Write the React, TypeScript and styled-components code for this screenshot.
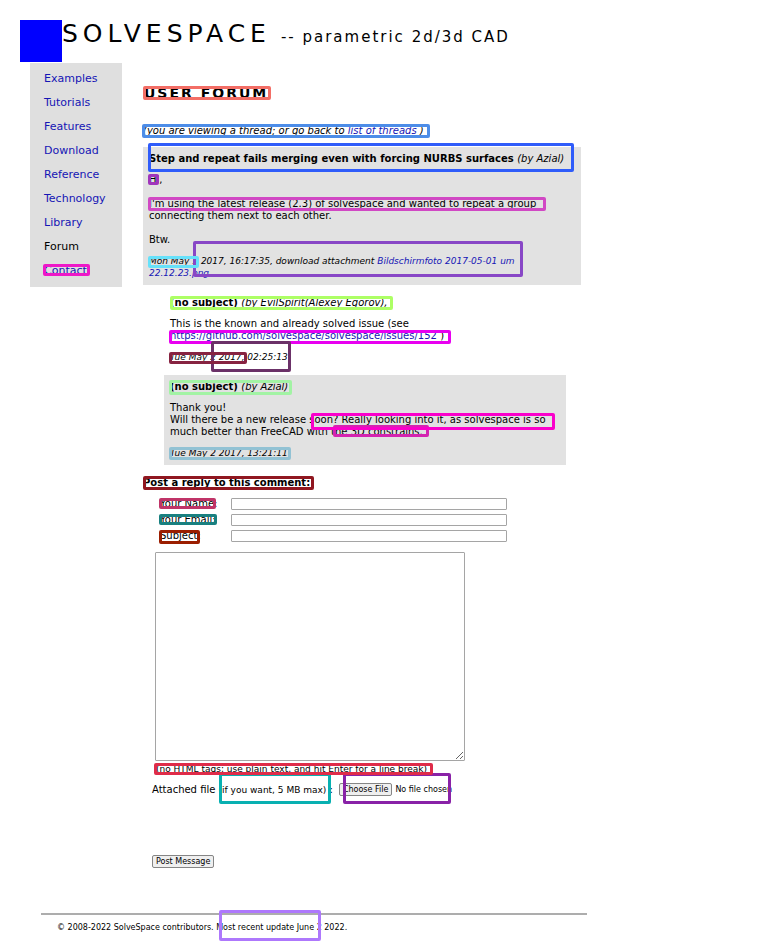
import React from "react";
import styled, { createGlobalStyle, css } from "styled-components";

const Global = createGlobalStyle`
  *, *::before, *::after { box-sizing: border-box; }
  body {
    margin: 0;
    background: #fff;
    color: #000;
    font-family: "DejaVu Sans", Verdana, sans-serif;
    font-size: 10px;
    line-height: 12px;
  }
`;

const Page = styled.div`
  position: relative;
  max-width: 768px;
  padding: 20px 20px 0;
`;

const Header = styled.header`
  display: flex;
  align-items: flex-start;
  white-space: nowrap;
`;

const Logo = styled.div`
  flex: none;
  width: 42px;
  height: 42px;
  background: #0000ff;
`;

const Brand = styled.div`
  font-size: 25px;
  line-height: 28px;
  letter-spacing: 5px;
`;

const Tagline = styled.span`
  margin-left: 10px;
  font-size: 15px;
  letter-spacing: 2px;
`;

const Columns = styled.div`
  display: flex;
  align-items: flex-start;
  gap: 21px;
  max-width: 561px;
  margin-top: 1px;
  padding-left: 10px;
`;

const Nav = styled.nav`
  flex: none;
  width: 92px;
  padding: 4px 0 4px 14px;
  background: #dfdfdf;
  font-size: 11px;
  line-height: 24px;
`;

const NavList = styled.ul`
  margin: 0;
  padding: 0;
  list-style: none;
`;

const Link = styled.a`
  color: #1515b5;
  text-decoration: none;
`;

const Main = styled.main`
  flex: 1;
  min-width: 0;
`;

const Title = styled.h1`
  margin: 20px 0 0 1px;
  font-size: 14px;
  line-height: 20px;
  letter-spacing: 2px;
`;

const Notice = styled.p`
  margin: 22px 0 10px;
  font-style: italic;
`;

const Post = styled.article<{ $shaded?: boolean; $reply?: boolean }>`
  padding: 6px;
  ${(p) => p.$shaded && css`background: #e2e2e2;`}
  ${(p) => p.$reply && css`margin: 6px 15px 0 21px;`}
`;

const Subject = styled.h2`
  margin: 0 0 9px;
  font-size: 10px;
  line-height: 12px;
`;

const Author = styled.span`
  font-weight: normal;
  font-style: italic;
`;

const Body = styled.p`
  margin: 0 0 9px;
`;

const Stamp = styled.p`
  margin: 0;
  font-size: 9px;
  line-height: 12px;
  font-style: italic;
`;

const FormTitle = styled.h2`
  margin: 12px 0 9px;
  font-size: 10px;
  line-height: 12px;
`;

const Fields = styled.div`
  display: grid;
  grid-template-columns: 71px minmax(0, 276px);
  align-items: center;
  row-gap: 4px;
  padding-left: 17px;
`;

const TextInput = styled.input`
  width: 100%;
  height: 12px;
  padding: 0 2px;
  border: 1px solid #a5a5a5;
  border-radius: 1px;
  background: #fff;
  font: inherit;
`;

const Message = styled.textarea`
  display: block;
  width: 310px;
  max-width: 100%;
  height: 209px;
  margin: 10px 0 2px 12px;
  border: 1px solid #a5a5a5;
  border-radius: 1px;
  font: inherit;
`;

const Hint = styled.p`
  margin: 0 0 0 13px;
  font-size: 9px;
`;

const Attachment = styled.div`
  display: flex;
  align-items: center;
  gap: 6px;
  margin: 8px 0 59px 9px;
  white-space: nowrap;
`;

const Small = styled.span`
  font-size: 9px;
`;

const buttonLook = css`
  height: 13px;
  padding: 0 3px;
  border: 1px solid #858585;
  border-radius: 2px;
  background: #efefef;
  color: #000;
  font-family: inherit;
  font-size: 8px;
  line-height: 11px;
`;

const FileInput = styled.input`
  width: 120px;
  font-family: inherit;
  font-size: 8px;
  line-height: 12px;

  &::file-selector-button {
    ${buttonLook}
    margin: 0 3px 0 0;
  }
`;

const Submit = styled.button`
  ${buttonLook}
  display: block;
  margin-left: 9px;
`;

const Footer = styled.footer`
  max-width: 546px;
  margin: 45px 0 0 21px;
  padding: 7px 16px 18px;
  border-top: 2px solid #adadad;
  font-size: 8px;
`;

const Overlay = styled.div`
  position: absolute;
  inset: 0;
  pointer-events: none;
`;

const Box = styled.div<{ $x: number; $y: number; $w: number; $h: number; $color: string }>`
  position: absolute;
  left: ${(p) => p.$x}px;
  top: ${(p) => p.$y}px;
  width: ${(p) => p.$w}px;
  height: ${(p) => p.$h}px;
  border: 3px solid ${(p) => p.$color};
  border-radius: 2px;
`;

const sections = ["Examples", "Tutorials", "Features", "Download", "Reference", "Technology", "Library", "Forum", "Contact"];

const boxes: [number, number, number, number, string][] = [
  [143, 86, 128, 14, "#f36e66"],
  [142, 124, 288, 14, "#4d8de8"],
  [148, 143, 426, 29, "#2f5cfa"],
  [148, 174, 11, 11, "#a035bb"],
  [148, 197, 398, 14, "#d148c4"],
  [193, 241, 330, 36, "#8847c6"],
  [148, 256, 51, 12, "#66e1fa"],
  [43, 264, 47, 12, "#ee18c8"],
  [170, 296, 223, 14, "#adff65"],
  [169, 330, 282, 14, "#e800f0"],
  [211, 341, 80, 31, "#6b3168"],
  [169, 352, 78, 12, "#872341"],
  [169, 380, 123, 15, "#a2f3a4"],
  [333, 425, 96, 12, "#d424b0"],
  [311, 413, 244, 17, "#fa00cb"],
  [169, 447, 122, 13, "#92c2d4"],
  [143, 476, 171, 14, "#901720"],
  [159, 498, 57, 11, "#c03468"],
  [159, 514, 58, 11, "#198080"],
  [159, 530, 41, 14, "#9b1e00"],
  [219, 773, 112, 31, "#08b0b1"],
  [343, 773, 108, 31, "#8922a7"],
  [154, 763, 279, 12, "#df2c49"],
  [219, 910, 102, 31, "#ae78fc"],
];

export default function App() {
  return (
    <>
      <Global />
      <Page>
        <Header>
          <Logo />
          <Brand>
            SOLVESPACE<Tagline>-- parametric 2d/3d CAD</Tagline>
          </Brand>
        </Header>
        <Columns>
          <Nav>
            <NavList>
              {sections.map((name) => (
                <li key={name}>{name === "Forum" ? name : <Link href="#">{name}</Link>}</li>
              ))}
            </NavList>
          </Nav>
          <Main>
            <Title>USER FORUM</Title>
            <Notice>
              (you are viewing a thread; or go back to <Link href="#">list of threads</Link> )
            </Notice>
            <Post $shaded>
              <Subject>
                Step and repeat fails merging even with forcing NURBS surfaces <Author>(by Azial)</Author>
              </Subject>
              <Body>
                Hi,
                <br />
                <br />
                I'm using the latest release (2.3) of solvespace and wanted to repeat a group
                <br />
                connecting them next to each other.
                <br />
                <br />
                Btw.
              </Body>
              <Stamp>
                Mon May 1 2017, 16:17:35, download attachment{" "}
                <Link href="#">
                  Bildschirmfoto 2017-05-01 um
                  <br />
                  22.12.23.png
                </Link>
              </Stamp>
            </Post>
            <Post $reply>
              <Subject>
                (no subject) <Author>(by EvilSpirit(Alexey Egorov),</Author>
              </Subject>
              <Body>
                This is the known and already solved issue (see
                <br />
                <Link href="#">https://github.com/solvespace/solvespace/issues/152</Link> )
              </Body>
              <Stamp>Tue May 2 2017, 02:25:13</Stamp>
            </Post>
            <Post $shaded $reply>
              <Subject>
                (no subject) <Author>(by Azial)</Author>
              </Subject>
              <Body>
                Thank you!
                <br />
                Will there be a new release soon? Really looking into it, as solvespace is so
                <br />
                much better than FreeCAD with the 3D constrains.
              </Body>
              <Stamp>Tue May 2 2017, 13:21:11</Stamp>
            </Post>
            <form onSubmit={(e) => e.preventDefault()}>
              <FormTitle>Post a reply to this comment:</FormTitle>
              <Fields>
                <label htmlFor="name">Your Name:</label>
                <TextInput id="name" type="text" />
                <label htmlFor="email">Your Email:</label>
                <TextInput id="email" type="email" />
                <label htmlFor="subject">Subject:</label>
                <TextInput id="subject" type="text" />
              </Fields>
              <Message aria-label="Message" />
              <Hint>(no HTML tags; use plain text, and hit Enter for a line break)</Hint>
              <Attachment>
                <label htmlFor="file">
                  Attached file <Small>(if you want, 5 MB max)</Small> :
                </label>
                <FileInput id="file" type="file" />
              </Attachment>
              <Submit type="submit">Post Message</Submit>
            </form>
          </Main>
        </Columns>
        <Footer>© 2008-2022 SolveSpace contributors. Most recent update June 2 2022.</Footer>
        <Overlay>
          {boxes.map(([x, y, w, h, color]) => (
            <Box key={`${x}-${y}`} $x={x} $y={y} $w={w} $h={h} $color={color} />
          ))}
        </Overlay>
      </Page>
    </>
  );
}
